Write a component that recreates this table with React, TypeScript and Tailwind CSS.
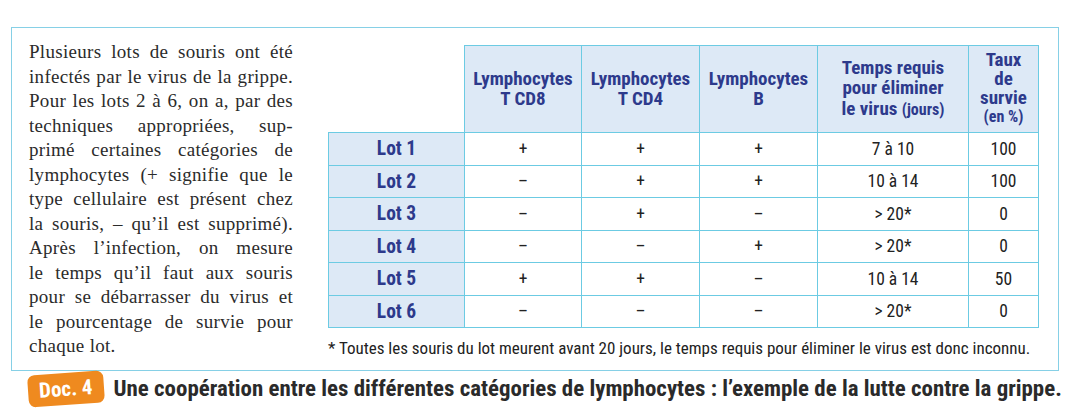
import React from 'react';

const sans = "font-['Liberation_Sans_Narrow','Roboto_Condensed',Roboto,sans-serif]";

type Row = { lot: string; cd8: string; cd4: string; b: string; temps: string; taux: string };

const rows: Row[] = [
    { lot: 'Lot 1', cd8: '+', cd4: '+', b: '+', temps: '7 à 10', taux: '100' },
    { lot: 'Lot 2', cd8: '–', cd4: '+', b: '+', temps: '10 à 14', taux: '100' },
    { lot: 'Lot 3', cd8: '–', cd4: '+', b: '–', temps: '> 20*', taux: '0' },
    { lot: 'Lot 4', cd8: '–', cd4: '–', b: '+', temps: '> 20*', taux: '0' },
    { lot: 'Lot 5', cd8: '+', cd4: '+', b: '–', temps: '10 à 14', taux: '50' },
    { lot: 'Lot 6', cd8: '–', cd4: '–', b: '–', temps: '> 20*', taux: '0' },
];

// paragraph lines, kept as in the printed page (justified line by line)
const lines = [
    'Plusieurs lots de souris ont été',
    'infectés par le virus de la grippe.',
    'Pour les lots 2 à 6, on a, par des',
    'techniques appropriées, sup-',
    'primé certaines catégories de',
    'lymphocytes (+ signifie que le',
    'type cellulaire est présent chez',
    'la souris, – qu’il est supprimé).',
    'Après l’infection, on mesure',
    'le temps qu’il faut aux souris',
    'pour se débarrasser du virus et',
    'le pourcentage de survie pour',
];

const th = 'border-[1.5px] border-[#6ccbe3] bg-[#dde9f6] text-[#2d3a8c] font-bold text-[19px] leading-[20.5px] text-center align-middle px-1';
const td = 'border-[1.5px] border-[#6ccbe3] text-[#222] text-[17.5px] text-center align-middle h-[32.5px] p-0';

export default function App() {
    return (
        <div className="w-[1072px] h-[420px] bg-white relative">
            {/* Main framed box */}
            <div className="absolute left-[11px] top-[27px] w-[1048px] h-[344px] border-[1.5px] border-[#86d0e6] flex">
                <div className="w-[264px] ml-[17px] mt-[12px] font-['Liberation_Serif',serif] text-[19px] leading-[24.5px] tracking-[0.3px] text-[#2b2b2b]">
                    {lines.map((l) => (
                        <div key={l} className="text-justify [text-align-last:justify] whitespace-nowrap">
                            {l}
                        </div>
                    ))}
                    <div>chaque lot.</div>
                </div>

                <div className={`ml-[35px] mt-[17px] ${sans}`}>
                    <table className="border-collapse table-fixed">
                        <colgroup>
                            <col className="w-[136px]" />
                            <col className="w-[117px]" />
                            <col className="w-[118px]" />
                            <col className="w-[118px]" />
                            <col className="w-[151px]" />
                            <col className="w-[70px]" />
                        </colgroup>
                        <thead>
                            <tr className="h-[87px]">
                                <th className="border-0"></th>
                                <th className={th}>Lymphocytes<br />T CD8</th>
                                <th className={th}>Lymphocytes<br />T CD4</th>
                                <th className={th}>Lymphocytes<br />B</th>
                                <th className={th}>
                                    Temps requis<br />pour éliminer<br />le virus <span className="text-[16px]">(jours)</span>
                                </th>
                                <th className={`${th} !leading-[18.7px]`}>
                                    Taux<br />de<br />survie<br /><span className="text-[16px]">(en %)</span>
                                </th>
                            </tr>
                        </thead>
                        <tbody>
                            {rows.map((r) => (
                                <tr key={r.lot}>
                                    <td className="border-[1.5px] border-[#6ccbe3] bg-[#dde9f6] text-[#2d3a8c] font-bold text-[19.5px] text-center h-[32.5px] p-0">
                                        {r.lot}
                                    </td>
                                    <td className={td}>{r.cd8}</td>
                                    <td className={td}>{r.cd4}</td>
                                    <td className={td}>{r.b}</td>
                                    <td className={td}>{r.temps}</td>
                                    <td className={td}>{r.taux}</td>
                                </tr>
                            ))}
                        </tbody>
                    </table>
                    <p className="mt-[10px] text-[17px] text-[#222] leading-[20px]">
                        * Toutes les souris du lot meurent avant 20 jours, le temps requis pour éliminer le virus est donc inconnu.
                    </p>
                </div>
            </div>

            {/* Caption */}
            <div className={`absolute left-[28px] top-[373px] flex items-center gap-[10px] ${sans}`}>
                <span className="inline-block -rotate-[4deg] bg-[#ef8a1f] text-white font-bold text-[21px] leading-[32px] px-[11px] rounded-[7px]">
                    Doc. 4
                </span>
                <span className="font-bold text-[22.9px] text-[#2a2a2a] leading-[30px] whitespace-nowrap">
                    Une coopération entre les différentes catégories de lymphocytes : l’exemple de la lutte contre la grippe.
                </span>
            </div>
        </div>
    );
}
